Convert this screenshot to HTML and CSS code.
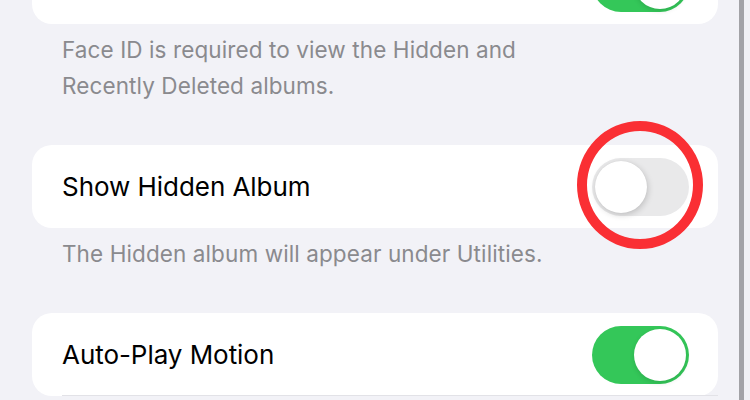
FILE: index.html
```html
<!DOCTYPE html>
<html>
<head>
<meta charset="utf-8">
<link rel="stylesheet" href="styles.css">
</head>
<body>
<div class="screen">
  <main class="content">
    <section class="card card-top">
      <div class="row end">
        <span class="toggle on"><span class="knob"></span></span>
      </div>
    </section>
    <p class="note">Face ID is required to view the Hidden and<br>Recently Deleted albums.</p>

    <section class="card card-hidden">
      <div class="row">
        <span class="label">Show Hidden Album</span>
        <span class="toggle off"><span class="knob"></span></span>
      </div>
      <span class="highlight"></span>
    </section>
    <p class="note single">The Hidden album will appear under Utilities.</p>

    <section class="card card-bottom">
      <div class="row divided">
        <span class="label">Auto-Play Motion</span>
        <span class="toggle on"><span class="knob"></span></span>
      </div>
    </section>
  </main>
  <div class="scrollbar"></div>
  <div class="edge"></div>
</div>
</body>
</html>
```
FILE: styles.css
```css
* { box-sizing: border-box; }
html, body {
  margin: 0;
  padding: 0;
  height: 100%;
  overflow: hidden;
}
body {
  background: #f2f2f7;
  font-family: Inter, "Noto Sans", "Liberation Sans", sans-serif;
  -webkit-font-smoothing: antialiased;
}
.screen {
  display: grid;
  grid-template-columns: 739px 5px 1fr;
  height: 400px;
}
.content {
  padding: 0 21px 0 32px;
}
.scrollbar { background: #a2a2a6; }
.edge { background: #f0f0f4; }

.card {
  position: relative;
  background: #ffffff;
  border-radius: 20px;
}
.card-top {
  margin-top: -59px;
}
.row {
  height: 83px;
  display: flex;
  align-items: center;
  justify-content: space-between;
  padding: 0 29px 0 30px;
}
.row.end { justify-content: flex-end; }
.label {
  font-size: 26px;
  color: #000;
  letter-spacing: -0.05px;
}
.divided {
  position: relative;
}
.divided::after {
  content: "";
  position: absolute;
  left: 30px;
  right: 0;
  bottom: 0;
  height: 1.5px;
  background: #e2e2e7;
}

.toggle {
  position: relative;
  width: 97px;
  height: 58px;
  border-radius: 29px;
  flex: none;
}
.toggle.on { background: #34c759; }
.toggle.off { background: #e9e9ea; }
.knob {
  position: absolute;
  top: 3px;
  width: 52px;
  height: 52px;
  border-radius: 50%;
  background: #fff;
}
.toggle.on .knob { right: 3px; box-shadow: 0 2px 5px rgba(0,0,0,0.12); }
.toggle.off .knob { left: 3px; box-shadow: 1px 2px 6px rgba(0,0,0,0.18), 0 0 1px rgba(0,0,0,0.08); }

.note {
  margin: 0;
  padding: 8px 30px 0 30px;
  font-size: 22.5px;
  line-height: 36px;
  letter-spacing: 0.1px;
  color: #8a8a8e;
  height: 121px;
}
.note.single {
  padding-top: 8px;
  height: 85px;
}

.highlight {
  position: absolute;
  left: 545px;
  top: -24px;
  width: 126px;
  height: 128px;
  border: 10px solid #fa2f34;
  border-radius: 50%;
}
```
